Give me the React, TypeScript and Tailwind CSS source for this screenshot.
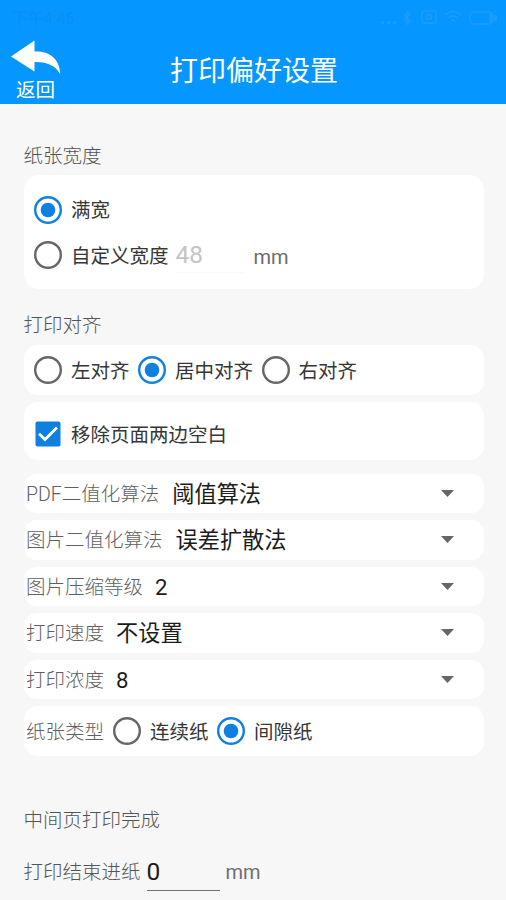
import React from "react";

const FONT = "font-[Roboto,'Noto_Sans_CJK_SC',sans-serif]";

function Radio({ checked = false }: { checked?: boolean }) {
  return (
    <svg width="28" height="28" viewBox="0 0 28 28" className="shrink-0">
      <circle cx="14" cy="14" r="12.8" fill="none" stroke={checked ? "#0f80e0" : "#666"} strokeWidth="2.4" />
      {checked && <circle cx="14" cy="14" r="7.3" fill="#0f80e0" />}
    </svg>
  );
}

function Option({ label, checked }: { label: string; checked?: boolean }) {
  return (
    <div className="flex items-center">
      <Radio checked={checked} />
      <span className="ml-[9px] pt-[3px] text-[#363636]">{label}</span>
    </div>
  );
}

function Checkbox() {
  return (
    <svg width="26" height="26" viewBox="0 0 26 26" className="shrink-0">
      <rect x="0.5" y="0.5" width="25" height="25" rx="2" fill="#0f80e0" />
      <path d="M4 12.7 10 18.5 22 6.5" fill="none" stroke="#fff" strokeWidth="2.7" />
    </svg>
  );
}

function SelectRow({ label, value, gap }: { label: string; value: string; gap: string }) {
  return (
    <div className="flex h-[39.5px] items-center rounded-[13px] bg-white pl-[2.5px] pr-[30px]">
      <span className="pt-[3px] font-light text-[#606060]">{label}</span>
      <span className={`pt-[1px] text-[22.2px] text-[#1c1c1c] ${gap}`}>{value}</span>
      <svg width="13" height="7" viewBox="0 0 13 7" className="ml-auto">
        <path d="M0 0H13L6.5 7Z" fill="#666" />
      </svg>
    </div>
  );
}

function StatusBar() {
  return (
    <div className="flex h-[36px] items-center justify-between pl-[12px] pr-[6px] text-[16px] text-[#0a8ff4]">
      <span className="pt-[1px]">下午4:46</span>
      <svg width="120" height="20" viewBox="0 0 120 20" fill="none" stroke="#1c9cfb" strokeWidth="1.4">
        <path d="M1 14.5h3M7 14.5h3M13 14.5h3" strokeWidth="2.4" />
        <path d="m24 6 6 7-3 3V3l3 3-6 7" />
        <rect x="42" y="3" width="14" height="12" rx="2" />
        <rect x="46.5" y="7" width="5" height="4" />
        <path d="M65 7q8-7 16 0M68 10q5-4 10 0M71 13q2-2 4 0" />
        <rect x="90" y="4" width="23" height="12" rx="4" />
        <path d="M115.5 7v6M111 5v10" strokeWidth="3" />
      </svg>
    </div>
  );
}

export default function App() {
  return (
    <div className={`h-[900px] w-[506px] overflow-hidden bg-[#f7f7f7] text-[19.5px] leading-[26px] ${FONT}`}>
      <header className="h-[104px] bg-[#0596ff] text-white">
        <StatusBar />
        <div className="flex h-[68px]">
          <div className="w-[170px] pl-[11px] pt-[4px]">
            <svg width="50" height="34" viewBox="0 0 50 34">
              <path d="M0 16.5 23.5 0.5V11.5C38 11 48.5 18 49.3 34C44 25 36 22 23.5 22V31.5Z" fill="#fff" />
            </svg>
            <div className="ml-[5px] mt-[4px]">返回</div>
          </div>
          <h1 className="pt-[18px] text-[28px] leading-[36px]">打印偏好设置</h1>
        </div>
      </header>

      <main className="pl-[23.5px] pr-[22px] whitespace-nowrap">
        <h2 className="pt-[40px] font-light text-[#545454]">纸张宽度</h2>
        <section className="mt-[5px] h-[114px] rounded-[15px] bg-white pl-[10.5px] pt-[20px]">
          <Option label="满宽" checked />
          <div className="mt-[13px] flex items-center">
            <Option label="自定义宽度" />
            <span className="ml-[7px] w-[69px] border-b border-[#fafafa] text-[24.5px] leading-[35px] text-[#c4c4c4]">48</span>
            <span className="ml-[9px] pt-[4px] text-[20px] text-[#6c6c6c]">mm</span>
          </div>
        </section>

        <h2 className="mt-[24px] font-light text-[#545454]">打印对齐</h2>
        <section className="mt-[6px] flex h-[50px] items-center gap-[8.5px] rounded-[14px] bg-white pl-[10.5px]">
          <Option label="左对齐" />
          <Option label="居中对齐" checked />
          <Option label="右对齐" />
        </section>

        <section className="mt-[7px] flex h-[57.5px] items-center rounded-[14px] bg-white pl-[11.5px] pt-[6px]">
          <Checkbox />
          <span className="ml-[10px] pt-[4px] text-[#363636]">移除页面两边空白</span>
        </section>

        <section className="mt-[14px] flex flex-col gap-[7px]">
          <SelectRow label="PDF二值化算法" value="阈值算法" gap="ml-[13px]" />
          <SelectRow label="图片二值化算法" value="误差扩散法" gap="ml-[13px]" />
          <SelectRow label="图片压缩等级" value="2" gap="ml-[12px]" />
          <SelectRow label="打印速度" value="不设置" gap="ml-[12px]" />
          <SelectRow label="打印浓度" value="8" gap="ml-[12px]" />
          <div className="flex h-[50px] items-center rounded-[14px] bg-white pl-[2.5px]">
            <span className="pt-[3px] font-light text-[#606060]">纸张类型</span>
            <div className="ml-[9px] flex gap-[8.5px]">
              <Option label="连续纸" />
              <Option label="间隙纸" checked />
            </div>
          </div>
        </section>

        <div className="mt-[52px] font-light text-[#545454]">中间页打印完成</div>
        <div className="mt-[18.5px] flex items-center text-[#707070]">
          <span className="pt-[2px] font-light text-[#545454]">打印结束进纸</span>
          <span className="ml-[6px] w-[73px] border-b border-[#707070] text-[24.5px] leading-[37px] text-[#1c1c1c]">0</span>
          <span className="ml-[6px] text-[20px]">mm</span>
        </div>
      </main>
    </div>
  );
}
